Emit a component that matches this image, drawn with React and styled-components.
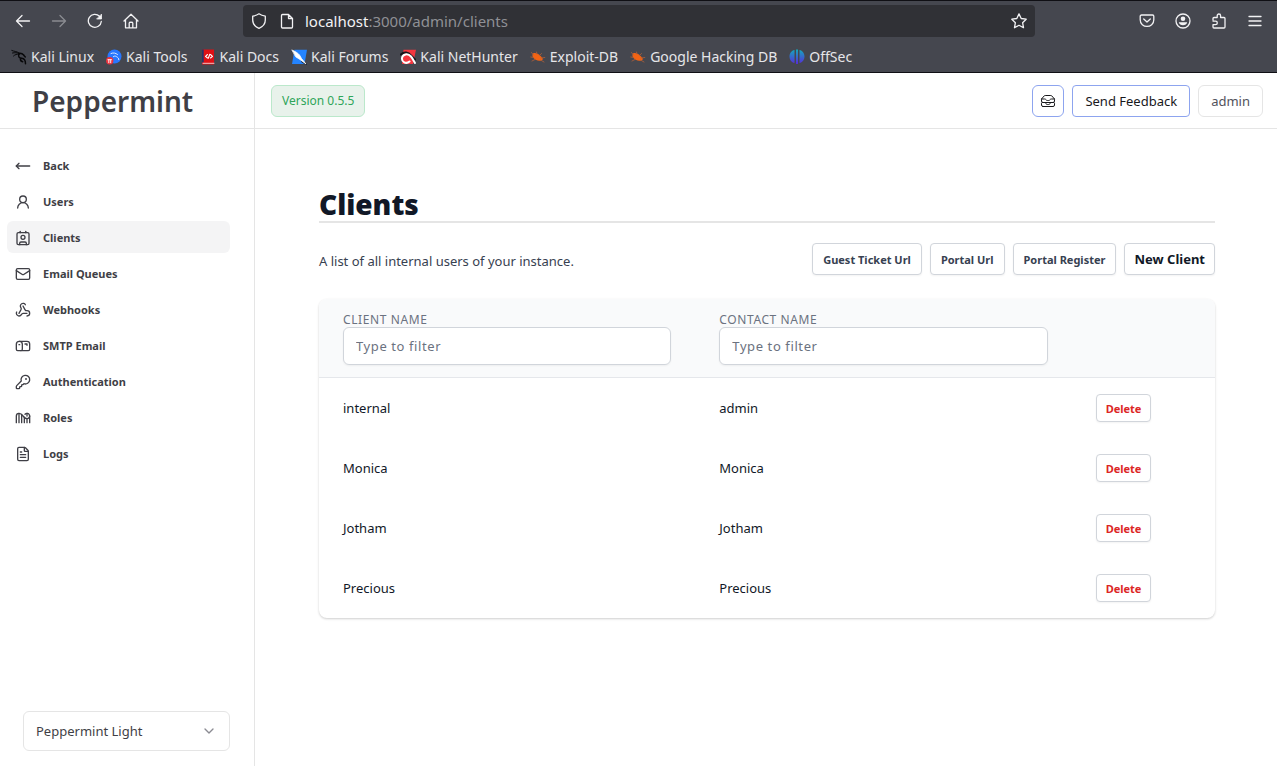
import React, { useState } from "react";
import styled, { createGlobalStyle } from "styled-components";
import {
  MoveLeft, UserRound, Contact, Mail, Webhook, Mailbox, KeyRound,
  RollerCoaster, FileText, ChevronDown,
} from "lucide-react";
import { HiOutlineInboxStack } from "react-icons/hi2";

const Global = createGlobalStyle`
  *, *::before, *::after { box-sizing: border-box; }
  body { margin: 0; background: #fff; font-family: "Noto Sans", sans-serif; }
  button, input, select { font-family: inherit; margin: 0; }
  h1, p { margin: 0; }
`;

const Screen = styled.div`
  min-height: 100vh;
  display: flex;
  flex-direction: column;
`;

const Chrome = styled.header`
  background: #45474f;
  border-top: 1px solid #0f0f14;
  border-bottom: 1px solid #0f0f14;
  color: #f2f2f4;
`;

const Toolbar = styled.div`
  display: grid;
  grid-template-columns: 235px minmax(0, 792px) 1fr;
  column-gap: 8px;
  padding: 4px 12px 0 0;
  align-items: center;
`;

const IconGroup = styled.div`
  display: flex;
  justify-content: ${(p) => (p.$end ? "flex-end" : "flex-start")};
  gap: 16px;
  padding-left: 13px;
`;

const ChromeButton = styled.button`
  display: flex;
  width: 20px;
  height: 20px;
  padding: 0;
  align-items: center;
  justify-content: center;
  border: 0;
  background: none;
  color: inherit;
  opacity: ${(p) => (p.disabled ? 0.4 : 1)};
  svg { display: block; }
`;

const AddressBar = styled.div`
  display: flex;
  align-items: center;
  gap: 8px;
  height: 32px;
  padding: 0 6px;
  border-radius: 4px;
  background: #303136;
`;

const Address = styled.div`
  flex: 1;
  font-size: 15px;
  line-height: 20px;
  color: #8f9095;
  span { color: #f2f2f4; }
`;

const Bookmarks = styled.nav`
  display: flex;
  gap: 12px;
  height: 35px;
  padding: 4px 11px 0;
  align-items: center;
`;

const Bookmark = styled.a`
  display: flex;
  align-items: center;
  gap: 4px;
  font-size: 14px;
  line-height: 20px;
  color: #e6e6e9;
  text-decoration: none;
  white-space: nowrap;
`;

const Workspace = styled.div`
  flex: 1;
  display: flex;
`;

const Sidebar = styled.aside`
  flex: 0 0 255px;
  display: flex;
  flex-direction: column;
  border-right: 1px solid #e5e5e5;
`;

const Brand = styled.div`
  height: 56px;
  padding: 0 32px;
  border-bottom: 1px solid #e5e5e5;
  font-size: 28px;
  font-weight: 600;
  line-height: 56px;
  color: #3f3f46;
`;

const Menu = styled.nav`
  flex: 1;
  display: flex;
  flex-direction: column;
  gap: 4px;
  padding: 20px 24px 0 7px;
`;

const MenuLink = styled.a`
  display: flex;
  align-items: center;
  gap: 12px;
  height: 32px;
  padding: 2px 8px 0;
  border-radius: 6px;
  background: ${(p) => (p.$active ? "#f4f4f5" : "transparent")};
  color: #3f3f46;
  font-size: 11px;
  font-weight: 700;
  line-height: 16px;
  text-decoration: none;
`;

const ThemePicker = styled.label`
  position: relative;
  display: block;
  margin: 0 24px 15px 23px;
  svg { position: absolute; right: 13px; top: 12px; color: #8b8b92; pointer-events: none; }
`;

const ThemeSelect = styled.select`
  display: block;
  width: 100%;
  height: 40px;
  padding: 0 12px;
  appearance: none;
  border: 1px solid #e5e5e5;
  border-radius: 6px;
  background: #fff;
  color: #3f3f46;
  font-size: 13px;
`;

const Main = styled.main`
  flex: 1;
  min-width: 0;
`;

const TopBar = styled.div`
  display: flex;
  align-items: center;
  gap: 8px;
  height: 56px;
  padding: 0 14px 0 16px;
  border-bottom: 1px solid #e5e5e5;
`;

const Version = styled.span`
  margin-right: auto;
  height: 32px;
  padding: 0 10px;
  border: 1px solid #bbe8cb;
  border-radius: 6px;
  background: #e8f2eb;
  color: #2fa55a;
  font-size: 12px;
  line-height: 30px;
`;

const TopButton = styled.button`
  display: flex;
  align-items: center;
  justify-content: center;
  height: 32px;
  min-width: 32px;
  padding: 0 ${(p) => (p.$icon ? 0 : 12)}px;
  border: 1px solid ${(p) => (p.$plain ? "#e5e5e5" : "#8da4ef")};
  border-radius: ${(p) => (p.$square ? 4 : 6)}px;
  background: #fff;
  color: ${(p) => (p.$plain ? "#52525b" : "#18181b")};
  font-size: 13px;
  line-height: 20px;
`;

const Content = styled.section`
  padding: 58px 62px 64px 64px;
`;

const Title = styled.h1`
  border-bottom: 2px solid #e5e5e5;
  color: #111827;
  font-size: 28px;
  font-weight: 900;
  line-height: 34px;
`;

const Intro = styled.div`
  display: flex;
  align-items: center;
  justify-content: space-between;
  margin: 20px 0 24px;
`;

const IntroText = styled.p`
  padding-top: 4px;
  color: #374151;
  font-size: 13px;
  line-height: 20px;
`;

const Actions = styled.div`
  display: flex;
  gap: 8px;
`;

const ActionButton = styled.button`
  height: ${(p) => (p.$danger ? 28 : 32)}px;
  padding: ${(p) => (p.$strong ? 0 : 1)}px ${(p) => (p.$strong || p.$danger ? 9 : 10)}px 0;
  border: 1px solid #d1d5db;
  border-radius: 4px;
  background: #fff;
  box-shadow: 0 1px 2px rgba(0, 0, 0, 0.05);
  color: ${(p) => (p.$danger ? "#dc2626" : p.$strong ? "#111827" : "#374151")};
  font-size: ${(p) => (p.$strong ? 13 : 11)}px;
  font-weight: 700;
  line-height: 16px;
  white-space: nowrap;
`;

const Card = styled.div`
  border-radius: 8px;
  overflow: hidden;
  box-shadow: 0 1px 3px rgba(0, 0, 0, 0.1), 0 1px 2px rgba(0, 0, 0, 0.1);
`;

const Table = styled.table`
  width: 100%;
  border-collapse: separate;
  border-spacing: 0;
  table-layout: fixed;
  color: #111827;
  font-size: 13px;
  line-height: 20px;
`;

const HeadCell = styled.th`
  height: 79px;
  width: ${(p) => p.$width};
  padding: 14px 24px 12px;
  border-bottom: 1px solid #e5e7eb;
  background: #f9fafb;
  color: #6b7280;
  text-align: left;
  vertical-align: top;
  font-size: 12px;
  font-weight: 400;
  line-height: 14px;
  letter-spacing: 0.05em;
`;

const FilterInput = styled.input`
  display: block;
  width: 100%;
  height: 38px;
  padding: 0 12px;
  border: 1px solid #d1d5db;
  border-radius: 6px;
  background: #fff;
  box-shadow: 0 1px 2px rgba(0, 0, 0, 0.05);
  color: #111827;
  font-size: 13px;
  letter-spacing: inherit;
  &::placeholder { color: #6b7280; }
`;

const Cell = styled.td`
  height: 60px;
  padding: 0 24px;
`;

const Glyph = ({ children, size = 16 }) => (
  <svg width={size} height={size} viewBox="0 0 16 16" fill="none" stroke="currentColor" strokeWidth="1.3" strokeLinecap="round" strokeLinejoin="round" aria-hidden="true">
    {children}
  </svg>
);

const KaliDragon = () => (
  <Glyph>
    <path d="M.8 1.500c2.200 1 4.700.6 7.200 2.500M1.500 4c2.500-.5 4.500-.5 6.500.5M2.500 7c1.500-1.500 3.500-2 5.500-1.800" stroke="#08080a" strokeWidth="1" />
    <path d="M8 4.200c1.500-.2 3.500.3 5 2M8.300 4.800c-1.800 2.500-.3 4.200 2.500 4.500 2.500.3 3.700 2 3.700 5.500M9.500 9.500c-.3 1.800.5 2.800 2.200 3.200M12.500 6l1.800 2" stroke="#08080a" strokeWidth="1.500" />
  </Glyph>
);
const KaliTools = () => (
  <Glyph>
    <circle cx="8.500" cy="7.500" r="7" fill="#2777ff" stroke="none" />
    <path d="M5 4.500c2.500-1 4.500-.6 6.500 1M7.500 7.500c1.500-1 2.500-.2 3.300.4 1.200.7 2 1.300 2 2.800" stroke="#dbe9ff" strokeWidth="1" />
    <circle cx="3.700" cy="11.800" r="3.700" fill="#e8343f" stroke="none" />
    <path d="M1.900 10.700h3.600M2.800 10.700v3M4.700 10.700v3" stroke="#fff" strokeWidth=".9" />
  </Glyph>
);
const KaliDocs = () => (
  <Glyph>
    <path d="M2 .5h12v15H2z" fill="#df1015" stroke="none" />
    <path d="M2 .5h1.700v13H2z" fill="#25356b" stroke="none" />
    <path d="M3 14.300h11" stroke="#f1c5c5" strokeWidth="1" />
    <path d="M7.500 5.500 5.500 7.300l2 1.700M10.500 5.500l2 1.800-2 1.700M9.800 5.300 8.300 9.300" stroke="#fff" strokeWidth="1.100" />
  </Glyph>
);
const KaliForums = () => (
  <Glyph>
    <path d="M3.500.8H16L13.500 15H1z" fill="#2484ff" stroke="none" />
    <path d="M.5 1 4 5M11 12.500l4 2.500" stroke="#111827" strokeWidth="1.500" />
    <path d="M1 1c3 1.500 5.500 2.500 7.500 5l2 3.500 4.500 5.500-6-4.500-4-2.500z" fill="#fff" stroke="#fff" strokeWidth=".8" />
  </Glyph>
);
const KaliNet = () => (
  <Glyph>
    <path d="M3.500.8H16L13 15H2z" fill="#f4363f" stroke="none" />
    <path d="M.8 5.500C4 2.500 8.500 3 11 6.500l4 4" stroke="#15151a" strokeWidth="2" />
    <path d="M9.500 12.500C6 15.500 1.500 13 2 9s6-5 9-1.500c1.500 1.800 2.500 4 4 6.500" stroke="#fff" strokeWidth="2" />
  </Glyph>
);
const Exploit = () => (
  <Glyph>
    <path d="M3 4.500c2.500-1.500 7 .5 10 5.500-1.200 2.300-4.800 2.300-7.300.8S1.500 7 3 4.500z" fill="#f26313" stroke="none" />
    <path d="M3.500 6 1.500 3.500M7 5 6.500 3M9.500 6.500l2-2M3.500 8.500.8 8M5 10.500l-3 1.500M11 9l3.800-.5M10.500 11l3.500 2" stroke="#b0603a" strokeWidth=".8" />
  </Glyph>
);
const OffSec = () => (
  <Glyph>
    <defs>
      <linearGradient id="offsec" x1="0" y1="0" x2="0" y2="1">
        <stop stopColor="#13a9bd" />
        <stop offset="1" stopColor="#572bd8" />
      </linearGradient>
    </defs>
    <path d="M5.500 1v13C2.500 13.500.5 10.500.5 7.500S2.500 1.500 5.500 1zM7 .5h2V15H7zM10.500 1c3 .5 5 3.500 5 6.500s-2 6-5 6.500z" fill="url(#offsec)" stroke="none" />
  </Glyph>
);

const bookmarks = [
  ["Kali Linux", KaliDragon], ["Kali Tools", KaliTools], ["Kali Docs", KaliDocs],
  ["Kali Forums", KaliForums], ["Kali NetHunter", KaliNet], ["Exploit-DB", Exploit],
  ["Google Hacking DB", Exploit], ["OffSec", OffSec],
];

const menu = [
  ["Back", MoveLeft], ["Users", UserRound], ["Clients", Contact],
  ["Email Queues", Mail], ["Webhooks", Webhook], ["SMTP Email", Mailbox],
  ["Authentication", KeyRound], ["Roles", RollerCoaster], ["Logs", FileText],
];

const clients = [
  ["internal", "admin"], ["Monica", "Monica"], ["Jotham", "Jotham"], ["Precious", "Precious"],
];

function BrowserChrome() {
  return (
    <Chrome>
      <Toolbar>
        <IconGroup>
          <ChromeButton aria-label="Go back"><Glyph><path d="M14.500 8h-13M7 2.500 1.500 8 7 13.500" /></Glyph></ChromeButton>
          <ChromeButton aria-label="Go forward" disabled><Glyph><path d="M1.500 8h13M9 2.500 14.500 8 9 13.500" /></Glyph></ChromeButton>
          <ChromeButton aria-label="Reload"><Glyph><path d="M14.300 8.500A6.500 6.500 0 1 1 12.500 3.300" /><path d="M14.500 1.500v4.500H10z" fill="currentColor" strokeWidth=".8" /></Glyph></ChromeButton>
          <ChromeButton aria-label="Home"><Glyph><path d="M1 8 8 1.200 15 8M2.500 6.800v8h11v-8M6.200 14.500V10c0-1 3.600-1 3.600 0v4.500" /></Glyph></ChromeButton>
        </IconGroup>
        <AddressBar>
          <ChromeButton aria-label="Tracking protection"><Glyph><path d="M8 .8c2 1.400 4 2 6.300 2.300v4C14.300 11 12 13.800 8 15.300 4 13.800 1.700 11 1.700 7.100v-4C4 2.800 6 2.200 8 .8z" /></Glyph></ChromeButton>
          <ChromeButton aria-label="Site information"><Glyph><path d="M3.500 1.500h6l4 4V14c0 .6-.4 1-1 1h-9c-.6 0-1-.4-1-1V2.500c0-.6.400-1 1-1zM9.500 1.500v4h4" /></Glyph></ChromeButton>
          <Address><span>localhost</span>:3000/admin/clients</Address>
          <ChromeButton aria-label="Bookmark this page"><Glyph><path d="m8 .9 2.200 4.600 5 .7-3.600 3.500.9 5L8 12.300l-4.500 2.400.9-5L.8 6.200l5-.7z" /></Glyph></ChromeButton>
        </AddressBar>
        <IconGroup $end>
          <ChromeButton aria-label="Save to Pocket"><Glyph><path d="M2.500 2h11c.8 0 1.300.5 1.300 1.300v3.400c0 9-13.600 9-13.600 0V3.300c0-.8.5-1.300 1.300-1.300zM4.700 6 8 9l3.300-3" /></Glyph></ChromeButton>
          <ChromeButton aria-label="Account"><Glyph><circle cx="8" cy="8" r="7" /><circle cx="8" cy="5.800" r="2.300" fill="currentColor" stroke="none" /><path d="M3.800 9.300h8.400c-.5 4-7.900 4-8.400 0z" fill="currentColor" stroke="none" /></Glyph></ChromeButton>
          <ChromeButton aria-label="Extensions"><Glyph><path d="M2 7V5.500c0-.6.400-1 1-1h3.200V2.700a1.700 1.700 0 0 1 3.400 0v1.800H13c.6 0 1 .4 1 1V14c0 .6-.4 1-1 1H3c-.6 0-1-.4-1-1v-2.300h2.500a1.800 1.800 0 0 0 0-3.600H2" /></Glyph></ChromeButton>
          <ChromeButton aria-label="Open menu"><Glyph><path d="M2 3.500h12M2 8h12M2 12.500h12" /></Glyph></ChromeButton>
        </IconGroup>
      </Toolbar>
      <Bookmarks aria-label="Bookmarks">
        {bookmarks.map(([name, Icon]) => (
          <Bookmark href="#" key={name}><Icon />{name}</Bookmark>
        ))}
      </Bookmarks>
    </Chrome>
  );
}

export default function App() {
  const [filters, setFilters] = useState(["", ""]);
  const setFilter = (i, v) => setFilters(filters.map((f, j) => (i === j ? v : f)));
  const rows = clients.filter((row) =>
    row.every((v, i) => v.toLowerCase().includes(filters[i].toLowerCase()))
  );
  return (
    <>
      <Global />
      <Screen>
        <BrowserChrome />
        <Workspace>
          <Sidebar>
            <Brand>Peppermint</Brand>
            <Menu aria-label="Admin">
              {menu.map(([name, Icon]) => (
                <MenuLink href="#" key={name} $active={name === "Clients"}>
                  <Icon size={16} />{name}
                </MenuLink>
              ))}
            </Menu>
            <ThemePicker>
              <ThemeSelect aria-label="Theme" defaultValue="light">
                <option value="light">Peppermint Light</option>
              </ThemeSelect>
              <ChevronDown size={16} />
            </ThemePicker>
          </Sidebar>
          <Main>
            <TopBar>
              <Version>Version 0.5.5</Version>
              <TopButton $icon aria-label="Inbox">
                <HiOutlineInboxStack size={16} />
              </TopButton>
              <TopButton $square>Send Feedback</TopButton>
              <TopButton $plain>admin</TopButton>
            </TopBar>
            <Content>
              <Title>Clients</Title>
              <Intro>
                <IntroText>A list of all internal users of your instance.</IntroText>
                <Actions>
                  <ActionButton>Guest Ticket Url</ActionButton>
                  <ActionButton>Portal Url</ActionButton>
                  <ActionButton>Portal Register</ActionButton>
                  <ActionButton $strong>New Client</ActionButton>
                </Actions>
              </Intro>
              <Card>
                <Table>
                  <thead>
                    <tr>
                      {["CLIENT NAME", "CONTACT NAME"].map((label, i) => (
                        <HeadCell key={label} $width="42%">
                          <label htmlFor={`filter-${i}`}>{label}</label>
                          <FilterInput id={`filter-${i}`} placeholder="Type to filter" value={filters[i]} onChange={(e) => setFilter(i, e.target.value)} />
                        </HeadCell>
                      ))}
                      <HeadCell $width="16%" aria-label="Actions" />
                    </tr>
                  </thead>
                  <tbody>
                    {rows.map(([name, contact]) => (
                      <tr key={name}>
                        <Cell>{name}</Cell>
                        <Cell>{contact}</Cell>
                        <Cell><ActionButton $danger>Delete</ActionButton></Cell>
                      </tr>
                    ))}
                  </tbody>
                </Table>
              </Card>
            </Content>
          </Main>
        </Workspace>
      </Screen>
    </>
  );
}
